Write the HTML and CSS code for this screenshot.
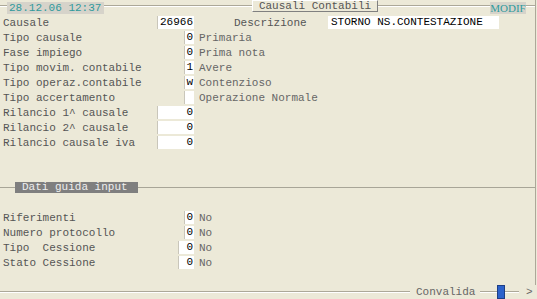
FILE: index.html
```html
<!DOCTYPE html>
<html lang="it">
<head>
  <meta charset="UTF-8" />
  <title>Causali Contabili</title>
  <link rel="stylesheet" href="styles.css">
</head>
<body>

  <div class="screen">

    <!-- BARRA SUPERIORE -->
    <header class="topbar">
      <div class="clock">28.12.06 12:37</div>
      <div class="title">Causali Contabili</div>
      <div class="mode">MODIF</div>
    </header>

    <!-- CAMPI PRINCIPALI -->
    <div class="form">
      <div class="row">
        <span class="lbl">Causale</span>
        <span class="cell"><span class="inp wide">26966</span></span>
        <span class="lbl-desc">Descrizione</span>
        <span class="inp text">STORNO NS.CONTESTAZIONE</span>
      </div>
      <div class="row">
        <span class="lbl">Tipo causale</span>
        <span class="cell"><span class="inp">0</span></span>
        <span class="desc">Primaria</span>
      </div>
      <div class="row">
        <span class="lbl">Fase impiego</span>
        <span class="cell"><span class="inp">0</span></span>
        <span class="desc">Prima nota</span>
      </div>
      <div class="row">
        <span class="lbl">Tipo movim. contabile</span>
        <span class="cell"><span class="inp">1</span></span>
        <span class="desc">Avere</span>
      </div>
      <div class="row">
        <span class="lbl">Tipo operaz.contabile</span>
        <span class="cell"><span class="inp">w</span></span>
        <span class="desc">Contenzioso</span>
      </div>
      <div class="row">
        <span class="lbl">Tipo accertamento</span>
        <span class="cell"><span class="inp"></span></span>
        <span class="desc">Operazione Normale</span>
      </div>
      <div class="row">
        <span class="lbl">Rilancio 1^ causale</span>
        <span class="cell"><span class="inp wide">0</span></span>
      </div>
      <div class="row">
        <span class="lbl">Rilancio 2^ causale</span>
        <span class="cell"><span class="inp wide">0</span></span>
      </div>
      <div class="row">
        <span class="lbl">Rilancio causale iva</span>
        <span class="cell"><span class="inp wide">0</span></span>
      </div>
    </div>

    <!-- DATI GUIDA -->
    <div class="section">
      <div class="section-title">Dati guida input</div>
    </div>

    <div class="form lower">
      <div class="row">
        <span class="lbl">Riferimenti</span>
        <span class="cell"><span class="inp">0</span></span>
        <span class="desc">No</span>
      </div>
      <div class="row">
        <span class="lbl">Numero protocollo</span>
        <span class="cell"><span class="inp">0</span></span>
        <span class="desc">No</span>
      </div>
      <div class="row">
        <span class="lbl">Tipo  Cessione</span>
        <span class="cell"><span class="inp mid">0</span></span>
        <span class="desc">No</span>
      </div>
      <div class="row">
        <span class="lbl">Stato Cessione</span>
        <span class="cell"><span class="inp mid">0</span></span>
        <span class="desc">No</span>
      </div>
    </div>
  </div>

  <!-- BARRA INFERIORE -->
  <footer class="footer">
    <span class="rule main-rule"></span>
    <span class="action">Convalida</span>
    <span class="rule short-rule"></span>
    <span class="marker"></span>
    <span class="rule tail-rule"></span>
    <span class="next">&gt;</span>
  </footer>

</body>
</html>
```

FILE: styles.css
```css
* {
  margin: 0;
  padding: 0;
  box-sizing: border-box;
}

body {
  font-family: 'Liberation Mono', 'Courier New', monospace;
  font-size: 11px;
  background-color: #ece9d8;
  color: #555;
  width: 537px;
  height: 299px;
  overflow: hidden;
}

.screen {
  width: 536px;
  height: 285px;
  border-right: 1px solid #aca899;
}

/* barra superiore */
.topbar {
  height: 15px;
  display: flex;
  align-items: flex-start;
  background:
    linear-gradient(#aca899, #aca899) 0 5px / 100% 1px no-repeat,
    linear-gradient(#fff, #fff) 0 6px / 100% 1px no-repeat;
}

.clock {
  margin-left: 7px;
  margin-top: 2px;
  width: 97px;
  height: 12px;
  line-height: 12px;
  padding-left: 2px;
  background-color: #d6d3ca;
  color: #2e9a9c;
}

.title {
  margin-left: 148px;
  width: 126px;
  height: 12px;
  line-height: 10px;
  text-align: center;
  background-color: #ece9d8;
  color: #555;
  border: 1px solid;
  border-color: #fff #808080 #808080 #fff;
}

.mode {
  margin-left: 112px;
  margin-top: 2px;
  width: 36px;
  height: 12px;
  line-height: 12px;
  text-align: center;
  font-family: 'Liberation Serif', 'Times New Roman', serif;
  font-size: 11px;
  background-color: #d6d3ca;
  color: #2e9a9c;
}

/* righe */
.row {
  display: flex;
  align-items: center;
  height: 15px;
  white-space: pre;
}

.lbl {
  width: 157px;
  padding-left: 3px;
}

.cell {
  width: 37px;
  display: flex;
  justify-content: flex-end;
}

.inp {
  display: block;
  width: 10px;
  height: 13px;
  line-height: 13px;
  background-color: #fff;
  color: #000;
  text-align: right;
  padding-right: 1px;
  border-left: 1px solid #c9c6ba;
}

.inp.wide {
  width: 37px;
}

.inp.mid {
  width: 16px;
}

.inp.text {
  width: 171px;
  text-align: left;
  padding-left: 3px;
  border-left: none;
}

.lbl-desc {
  margin-left: 40px;
  width: 94px;
}

.desc {
  margin-left: 5px;
  color: #666;
}

/* sezione dati guida */
.section {
  margin-top: 32px;
  height: 11px;
  display: flex;
  align-items: center;
  background: linear-gradient(#a8a597, #a8a597) 0 5px / 100% 1px no-repeat;
}

.section-title {
  margin-left: 15px;
  width: 123px;
  height: 11px;
  line-height: 11px;
  padding-left: 7px;
  background-color: #7f7f7f;
  color: #eee;
}

.lower {
  margin-top: 17px;
}

/* barra inferiore */
.footer {
  height: 14px;
  display: flex;
  align-items: center;
}

.rule {
  height: 2px;
  border-top: 1px solid #aca899;
  border-bottom: 1px solid #fff;
}

.main-rule {
  width: 410px;
}

.action {
  margin-left: 6px;
  width: 64px;
  color: #666;
}

.short-rule {
  width: 17px;
}

.marker {
  width: 8px;
  height: 14px;
  background-color: #2c62cb;
  border: 1px solid #1d3f86;
}

.tail-rule {
  width: 14px;
}

.next {
  margin-left: 7px;
  color: #666;
}
```
